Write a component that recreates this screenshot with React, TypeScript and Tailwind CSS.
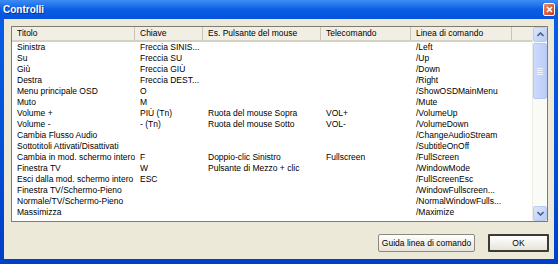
const COLS = [
  { title: "Titolo", w: "w-[123px]" },
  { title: "Chiave", w: "w-[68px]" },
  { title: "Es. Pulsante del mouse", w: "w-[118px]" },
  { title: "Telecomando", w: "w-[90px]" },
  { title: "Linea di comando", w: "w-[101px]" },
];

const ROWS: string[][] = [
  ["Sinistra", "Freccia SINIS...", "", "", "/Left"],
  ["Su", "Freccia SU", "", "", "/Up"],
  ["Giù", "Freccia GIÙ", "", "", "/Down"],
  ["Destra", "Freccia DEST...", "", "", "/Right"],
  ["Menu principale OSD", "O", "", "", "/ShowOSDMainMenu"],
  ["Muto", "M", "", "", "/Mute"],
  ["Volume +", "PIÙ (Tn)", "Ruota del mouse Sopra", "VOL+", "/VolumeUp"],
  ["Volume -", "- (Tn)", "Ruota del mouse Sotto", "VOL-", "/VolumeDown"],
  ["Cambia Flusso Audio", "", "", "", "/ChangeAudioStream"],
  ["Sottotitoli Attivati/Disattivati", "", "", "", "/SubtitleOnOff"],
  ["Cambia in mod. schermo intero", "F", "Doppio-clic Sinistro", "Fullscreen", "/FullScreen"],
  ["Finestra TV", "W", "Pulsante di Mezzo + clic", "", "/WindowMode"],
  ["Esci dalla mod. schermo intero", "ESC", "", "", "/FullScreenEsc"],
  ["Finestra TV/Schermo-Pieno", "", "", "", "/WindowFullscreen..."],
  ["Normale/TV/Schermo-Pieno", "", "", "", "/NormalWindowFulls..."],
  ["Massimizza", "", "", "", "/Maximize"],
];

function Chevron({ up }: { up?: boolean }) {
  return (
    <svg width="7" height="5" viewBox="0 0 7 5">
      <path
        d={up ? "M0.5 4 L3.5 1 L6.5 4" : "M0.5 1 L3.5 4 L6.5 1"}
        fill="none"
        stroke="#4D6185"
        strokeWidth="1.6"
      />
    </svg>
  );
}

function ScrollButton({ up }: { up?: boolean }) {
  return (
    <div className="h-[15px] w-full flex items-center justify-center rounded-[2px] border border-[#B9CBF3] bg-gradient-to-br from-[#DCE6FD] to-[#B6CBF8]">
      <Chevron up={up} />
    </div>
  );
}

export default function App() {
  return (
    <div className="w-[558px] h-[264px] flex flex-col bg-gradient-to-b from-[#0A5FE8] to-[#0040C8] font-['Liberation_Sans',sans-serif] text-black">
      {/* title bar */}
      <div className="h-[19px] flex items-center justify-between pl-[3px] pr-[3px] bg-gradient-to-b from-[#3D8CF5] via-[#0A5EE4] to-[#0553DC]">
        <span className="text-white font-bold text-[10px] [text-shadow:1px_1px_0_#0A2C8C]">Controlli</span>
        <div className="w-[12px] h-[13px] rounded-[2px] border border-white bg-gradient-to-br from-[#E88C6E] to-[#C3391A] flex items-center justify-center">
          <svg width="7" height="7" viewBox="0 0 7 7">
            <path d="M1 1 L6 6 M6 1 L1 6" stroke="white" strokeWidth="1.6" />
          </svg>
        </div>
      </div>

      {/* body */}
      <div className="flex-1 mx-[4px] mb-[5px] bg-[#ECE9D8] flex flex-col pt-[7px]">
        <div className="ml-[7px] mr-[6px] h-[196px] border border-[#7F7C6F] bg-white flex overflow-hidden">
          <div className="flex-1 flex flex-col">
            {/* header */}
            <div className="h-[15px] flex bg-[#F1EFE5] border-b-2 border-[#D5D1C1] text-[8.5px]">
              {COLS.map((c) => (
                <div key={c.title} className={`${c.w} pl-[5px] flex items-center border-r border-[#C8C5B5] whitespace-nowrap`}>
                  {c.title}
                </div>
              ))}
              <div className="flex-1" />
            </div>
            {/* rows */}
            <div className="flex flex-col text-[8.5px]">
              {ROWS.map((r, i) => (
                <div key={i} className="h-[11px] flex leading-[11px] whitespace-nowrap">
                  {r.map((cell, j) => (
                    <div key={j} className={`${COLS[j].w} pl-[5px] overflow-x-clip`}>
                      {cell}
                    </div>
                  ))}
                </div>
              ))}
            </div>
          </div>

          {/* scrollbar */}
          <div className="w-[15px] flex flex-col bg-[#FAFAF6] border-l border-[#EEEDE5]">
            <ScrollButton up />
            <div className="flex-1 flex flex-col pt-[1px]">
              <div className="h-[56px] rounded-[2px] border border-[#B4C8F6] bg-gradient-to-r from-[#CDDAFC] to-[#B9CDF9] flex flex-col items-center justify-center gap-[1px]">
                <div className="w-[6px] h-[1px] bg-[#EEF3FE]" />
                <div className="w-[6px] h-[1px] bg-[#EEF3FE]" />
                <div className="w-[6px] h-[1px] bg-[#EEF3FE]" />
                <div className="w-[6px] h-[1px] bg-[#EEF3FE]" />
              </div>
            </div>
            <ScrollButton />
          </div>
        </div>

        {/* buttons */}
        <div className="mt-[12px] flex justify-end gap-[13px] pr-[5px] text-[8.5px]">
          <button className="w-[97px] h-[18px] border border-[#8C8A7E] rounded-[2px] bg-gradient-to-b from-[#FFFFFF] to-[#E6E4DA]">
            Guida linea di comando
          </button>
          <button className="w-[61px] h-[18px] border-2 border-[#3B3A35] rounded-[1px] bg-gradient-to-b from-[#FFFFFF] to-[#E6E4DA]">
            OK
          </button>
        </div>
      </div>
    </div>
  );
}
